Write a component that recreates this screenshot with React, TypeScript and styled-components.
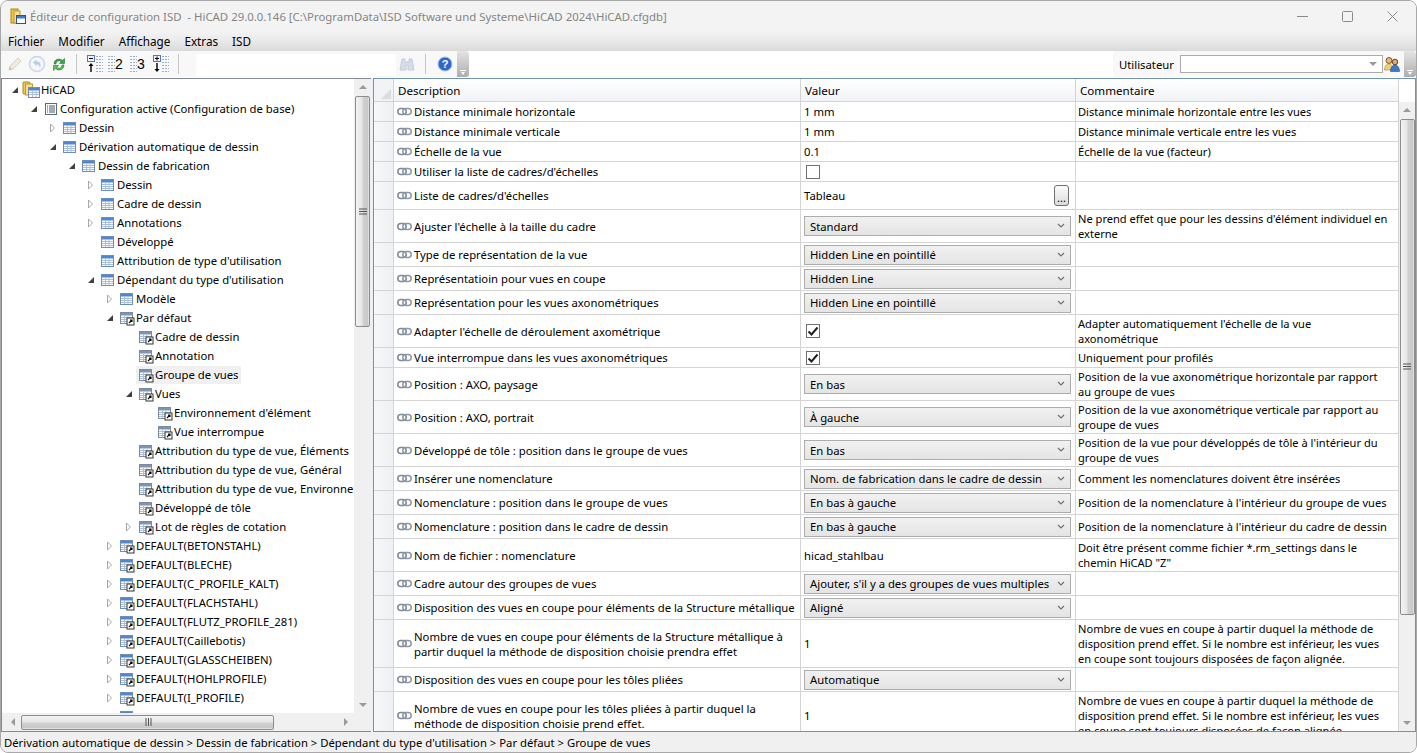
import React from "react";
import styled, { createGlobalStyle } from "styled-components";

const GlobalStyle = createGlobalStyle`
    html, body {
        margin: 0;
        padding: 0;
        background: #fff;
        overflow: hidden;
    }

    body {
        font-family: "Noto Sans", "Open Sans", sans-serif;
        font-size: 11.3px;
        color: #000;
    }
`;

const Window = styled.div`
    width: 1417px;
    height: 753px;
    box-sizing: border-box;
    border: 1px solid #a8a8a8;
    border-radius: 8px;
    background: #f0f0f0;
    display: flex;
    flex-direction: column;
    overflow: hidden;
`;

const TitleBar = styled.div`
    height: 30px;
    flex: none;
    display: flex;
    align-items: center;
    padding-left: 9px;
    padding-right: 1px;
    background: #f3f3f3;
    color: #858585;
`;

const TitleText = styled.span`
    margin-left: 3px;
    flex: 1;
    white-space: pre;
    font-size: 11.4px;
`;

const CaptionButton = styled.div`
    width: 45px;
    height: 30px;
    display: flex;
    align-items: center;
    justify-content: center;
`;

const MenuBar = styled.div`
    height: 20px;
    flex: none;
    display: flex;
    align-items: center;
    padding-left: 7px;
    gap: 14px;
    background: linear-gradient(#f4f4f4, #e9e9e9 50%, #dadada);
    font-size: 11.7px;
`;

const ToolRow = styled.div`
    height: 27px;
    flex: none;
    display: flex;
    background: #fff;
`;

const ToolStrip = styled.div`
    height: 26px;
    display: flex;
    align-items: center;
    background: #f8f8f8;
    border-radius: 3px 0 0 3px;
    padding-left: 6px;
`;

const ToolGap = styled.div`
    width: 200px;
    height: 22px;
    margin: 1px 3px 0 0;
    background: #fff;
`;

const ToolIcon = styled.div<{ $w: number; $mr?: number }>`
    width: ${(props): number => props.$w}px;
    height: 20px;
    margin-right: ${(props): number => props.$mr ?? 0}px;
    display: flex;
    align-items: center;
    justify-content: center;
    flex: none;
`;

const ToolSep = styled.div<{ $ml: number; $mr: number }>`
    width: 1px;
    height: 20px;
    background: #c6c6c6;
    margin: 0 ${(props): number => props.$mr}px 0 ${(props): number => props.$ml}px;
    flex: none;
`;

const Grip = styled.div`
    width: 12px;
    height: 26px;
    flex: none;
    position: relative;
    background: linear-gradient(#e4e4e4, #adadad);
    border-radius: 0 3px 3px 0;

    &::after {
        content: "";
        position: absolute;
        left: 3px;
        bottom: 6px;
        width: 6px;
        height: 1px;
        background: #fff;
    }

    &::before {
        content: "";
        position: absolute;
        left: 4px;
        bottom: 2px;
        border-style: solid;
        border-width: 3px 2.5px 0 2.5px;
        border-color: #fff transparent transparent transparent;
    }
`;

const ToolSpring = styled.div`
    flex: 1;
`;

const UserLabel = styled.span`
    width: 53px;
    flex: none;
    white-space: nowrap;
`;

const UserCombo = styled.div`
    width: 203px;
    height: 18px;
    box-sizing: border-box;
    border: 1px solid #ababab;
    margin-left: 8px;
    background: #fff;
    display: flex;
    align-items: center;
    justify-content: flex-end;
    padding-right: 5px;
    flex: none;
`;

const Panes = styled.div`
    flex: 1;
    min-height: 0;
    display: flex;
    gap: 1px;
`;

const TreePane = styled.div`
    width: 370px;
    flex: none;
    box-sizing: border-box;
    border: 1px solid #828790;
    border-right: none;
    background: #fff;
    display: flex;
    flex-direction: column;
    min-height: 0;
`;

const TreeBody = styled.div`
    flex: 1;
    min-height: 0;
    display: flex;
`;

const TreeList = styled.div`
    flex: 1;
    min-width: 0;
    overflow: hidden;
    padding-top: 1px;
`;

const TreeRow = styled.div<{ $level: number }>`
    height: 19px;
    display: flex;
    align-items: center;
    white-space: nowrap;
    padding-left: ${(props): number => 5 + props.$level * 19}px;
`;

const Expander = styled.div`
    width: 15px;
    height: 19px;
    flex: none;
    display: flex;
    align-items: center;
    justify-content: center;
`;

const TreeItem = styled.div<{ $selected?: boolean }>`
    height: 18px;
    display: flex;
    align-items: center;
    padding-right: 2px;
    background: ${(props): string => (props.$selected ? "#f0f0f0" : "transparent")};
`;

const TreeIcon = styled.div`
    width: 19px;
    height: 18px;
    flex: none;
    display: flex;
    align-items: center;
    justify-content: center;
`;

const VScroll = styled.div`
    width: 17px;
    flex: none;
    background: #f0f0f0;
    display: flex;
    flex-direction: column;
    align-items: center;
`;

const ArrowBox = styled.div<{ $grow?: boolean }>`
    height: 16px;
    flex: none;
    display: flex;
    align-items: center;
    justify-content: center;
    margin-top: ${(props): string => (props.$grow ? "auto" : "0")};
`;

const VThumb = styled.div<{ $top: number; $h: number }>`
    width: 15px;
    height: ${(props): number => props.$h}px;
    margin-top: ${(props): number => props.$top}px;
    box-sizing: border-box;
    border: 1px solid #8c8c8c;
    border-radius: 2px;
    background: linear-gradient(90deg, #f3f3f3, #e6e6e6 45%, #d0d0d0 55%, #c8c8c8 90%, #ececec);
    display: flex;
    align-items: center;
    justify-content: center;
    flex: none;
`;

const HScroll = styled.div`
    height: 18px;
    flex: none;
    background: #f0f0f0;
    display: flex;
    align-items: center;
    padding-left: 3px;
`;

const HArrow = styled.div`
    width: 16px;
    display: flex;
    justify-content: center;
    flex: none;
`;

const HThumb = styled.div`
    width: 253px;
    height: 15px;
    box-sizing: border-box;
    border: 1px solid #8c8c8c;
    border-radius: 2px;
    background: linear-gradient(#f3f3f3, #e6e6e6 45%, #d0d0d0 55%, #c8c8c8 90%, #ececec);
    display: flex;
    align-items: center;
    justify-content: center;
    flex: none;
    margin-right: 64px;
`;

const GridPane = styled.div`
    flex: 1;
    min-width: 0;
    margin-left: 1px;
    box-sizing: border-box;
    border: 1px solid #6f93b8;
    background: #fff;
    display: flex;
    overflow: hidden;
`;

const Table = styled.div`
    width: 1025px;
    flex: none;
    display: flex;
    flex-direction: column;
    overflow: hidden;
`;

const HeaderRow = styled.div`
    height: 23px;
    flex: none;
    display: grid;
    grid-template-columns: 20px 407px 275px 323px;
    box-sizing: border-box;
    border-bottom: 1px solid #d4d4d4;
    background: linear-gradient(#fff, #f1f3f6);
`;

const HeaderCorner = styled.div`
    position: relative;
    background: #f2f3f5;
    border-right: 1px solid #d4d4d4;

    &::after {
        content: "";
        position: absolute;
        right: 2px;
        bottom: 2px;
        border-style: solid;
        border-width: 0 0 10px 10px;
        border-color: transparent transparent #dcdcdc transparent;
    }
`;

const HeaderCell = styled.div`
    display: flex;
    align-items: center;
    padding: 0 0 0 4px;
    border-right: 1px solid #d4d4d4;
    box-sizing: border-box;
    font-size: 11.6px;
`;

const Row = styled.div<{ $h: number }>`
    height: ${(props): number => props.$h}px;
    flex: none;
    display: grid;
    grid-template-columns: 20px 407px 275px 323px;
    box-sizing: border-box;
    border-bottom: 1px solid #d4d4d4;
`;

const Selector = styled.div`
    background: linear-gradient(90deg, #f7f8f9, #eff0f3);
    border-right: 1px solid #d4d4d4;
`;

const Cell = styled.div`
    display: flex;
    align-items: center;
    box-sizing: border-box;
    border-right: 1px solid #d4d4d4;
    min-width: 0;
`;

const DescCell = styled(Cell)`
    padding: 0 0 0 3px;
    gap: 2px;
    line-height: 15px;
`;

const ChainSlot = styled.div`
    flex: none;
    display: flex;
    align-items: center;
`;

const ValueCell = styled(Cell)`
    padding-left: 3px;
    padding-right: 3px;
`;

const CommentCell = styled(Cell)`
    padding: 0 7px 0 2px;
    line-height: 15px;
    font-size: 11.1px;
`;

const Combo = styled.div`
    width: 267px;
    height: 20px;
    box-sizing: border-box;
    border: 1px solid #acacac;
    background: linear-gradient(#f1f1f1, #e4e4e4);
    display: flex;
    align-items: center;
    justify-content: space-between;
    padding: 0 5px;
    flex: none;
    white-space: nowrap;
`;

const Check = styled.div`
    width: 14px;
    height: 14px;
    margin-left: 2px;
    box-sizing: border-box;
    border: 1px solid #707070;
    background: #fff;
    display: flex;
    align-items: center;
    justify-content: center;
`;

const ValueText = styled.span`
    flex: 1;
`;

const EllipsisButton = styled.div`
    width: 15px;
    height: 21px;
    margin-right: 3px;
    box-sizing: border-box;
    border: 1px solid #707070;
    border-radius: 3px;
    background: linear-gradient(#fbfbfb, #dcdcdc);
    display: flex;
    align-items: flex-end;
    justify-content: center;
    line-height: 15px;
    font-size: 11px;
    flex: none;
`;

const ScrollColumn = styled.div`
    flex: 1;
    display: flex;
    flex-direction: column;
`;

const ScrollHead = styled.div`
    height: 23px;
    flex: none;
    background: #fff;
`;

const GridScroll = styled(VScroll)`
    flex: 1;
    width: auto;
`;

const StatusBar = styled.div`
    height: 20px;
    flex: none;
    display: flex;
    align-items: center;
    padding-left: 3px;
    background: #f0f0f0;
`;

const GripSvg = styled.svg<{ $horizontal?: boolean }>`
    transform: ${(props): string => (props.$horizontal ? "rotate(90deg)" : "none")};
`;

const GridIcon: React.FC<{ link?: boolean; grey?: boolean }> = ({ link, grey }) => (
    <svg width="16" height="16" viewBox="0 0 16 16">
        <rect x="1.5" y="2.5" width="12" height="11" fill="#fff" stroke={grey ? "#7d8a9a" : "#6f8db5"} />
        <rect x="2" y="3" width="11" height="2.5" fill={grey ? "#7d95b5" : "#4f86d0"} />
        <path d="M2 7.5h11M2 9.500h11M2 11.500h11M5.500 6v7M9 6v7" stroke="#a9bedb" strokeWidth="1" />
        {link && (
            <g>
                <rect x="8" y="8" width="7" height="7" fill="#fff" stroke="#333" />
                <path d="M10 13l3-3M11 10h2v2" stroke="#000" strokeWidth="1.1" fill="none" />
            </g>
        )}
    </svg>
);

const ListIcon: React.FC = () => (
    <svg width="14" height="14" viewBox="0 0 14 14">
        <rect x="1.5" y="1.5" width="11" height="11" fill="#fff" stroke="#5c6b80" />
        <path d="M3 4h1M5 4h6M3 6h1M5 6h6M3 8h1M5 8h6M3 10h1M5 10h6" stroke="#46536a" strokeWidth="1" />
    </svg>
);

const RootIcon: React.FC = () => (
    <svg width="19" height="18" viewBox="0 0 19 18">
        <rect x="1" y="1" width="7" height="12" rx="1" fill="#f5c94a" stroke="#a8862b" />
        <rect x="3.5" y="3" width="7" height="11" fill="#fbe08a" stroke="#b99a3a" />
        <rect x="6.5" y="6.5" width="11" height="10" fill="#fff" stroke="#6f8db5" />
        <rect x="7" y="7" width="10" height="2.5" fill="#4f86d0" />
        <path d="M7 11.500h10M7 13.500h10M10.500 10v6M14 10v6" stroke="#a9bedb" />
    </svg>
);

const TitleIcon: React.FC = () => (
    <svg width="17" height="17" viewBox="0 0 17 17">
        <rect x="1" y="1" width="7" height="14" fill="#f5c533" stroke="#a8862b" />
        <rect x="4" y="3" width="6" height="12" fill="#fbe08a" stroke="#b99a3a" />
        <rect x="6.5" y="7.5" width="9" height="8" fill="#fff" stroke="#35507a" />
        <rect x="7" y="8" width="8" height="2.5" fill="#3f7ad0" />
    </svg>
);

const OpenArrow: React.FC = () => (
    <svg width="8" height="8" viewBox="0 0 8 8">
        <path d="M7 1v6H1z" fill="#404040" />
    </svg>
);

const ClosedArrow: React.FC = () => (
    <svg width="7" height="10" viewBox="0 0 7 10">
        <path d="M1.500 1l4 4-4 4z" fill="#fff" stroke="#a6a6a6" />
    </svg>
);

const Chain: React.FC = () => (
    <svg width="15" height="9" viewBox="0 0 15 9">
        <rect x="0.8" y="1.500" width="8.400" height="6" rx="3" fill="none" stroke="#7f8997" strokeWidth="1.500" />
        <rect x="5.800" y="1.500" width="8.400" height="6" rx="3" fill="none" stroke="#8a97a9" strokeWidth="1.500" />
    </svg>
);

const Chevron: React.FC = () => (
    <svg width="8" height="6" viewBox="0 0 8 6">
        <path d="M1 1l3 3 3-3" fill="none" stroke="#707070" strokeWidth="1.2" />
    </svg>
);

const Tick: React.FC = () => (
    <svg width="12" height="12" viewBox="0 0 12 12">
        <path d="M1.500 6.500l3 3 6-7" fill="none" stroke="#222" strokeWidth="2" />
    </svg>
);

const ScrollGrip: React.FC<{ horizontal?: boolean }> = ({ horizontal }) => (
    <GripSvg width="8" height="8" viewBox="0 0 8 8" $horizontal={horizontal}>
        <path d="M0 1h8M0 3.500h8M0 6h8" stroke="#555" strokeWidth="1" />
    </GripSvg>
);

const ScrollArrow: React.FC<{ dir: "up" | "down" | "left" | "right" }> = ({ dir }) => {
    const shapes = { up: "M0 5l4-4 4 4z", down: "M0 1l4 4 4-4z", left: "M5 0L1 4l4 4z", right: "M1 0l4 4-4 4z" };
    const vertical = dir === "up" || dir === "down";
    return (
        <svg width={vertical ? 8 : 6} height={vertical ? 6 : 8} viewBox={vertical ? "0 0 8 6" : "0 0 6 8"}>
            <path d={shapes[dir]} fill="#9a9a9a" />
        </svg>
    );
};

const Pencil: React.FC = () => (
    <svg width="16" height="16" viewBox="0 0 16 16">
        <path d="M2 14l1-4 8-8 3 3-8 8z" fill="#f2ead8" stroke="#d8d2c4" />
        <path d="M2 14l1-3 2 2z" fill="#c8c0b0" />
    </svg>
);

const UndoIcon: React.FC = () => (
    <svg width="18" height="18" viewBox="0 0 18 18">
        <circle cx="9" cy="9" r="7.500" fill="#f4f7fb" stroke="#c9d6e6" strokeWidth="1.500" />
        <path d="M5 7.500L8.500 4.500v2c3.500 0 5 2.500 3.500 6-.6-2.200-1.800-3.200-3.500-3.200v2z" fill="#b9cde6" />
    </svg>
);

const RefreshIcon: React.FC = () => (
    <svg width="14" height="15" viewBox="0 0 14 15">
        <path d="M2 7a5 5 0 0 1 8.500-3.600L12.500 1.500v5h-5l1.700-1.700A3 3 0 0 0 4 7z" fill="#3fa34d" stroke="#1f7a2e" strokeWidth="0.6" />
        <path d="M12 8a5 5 0 0 1-8.500 3.600L1.500 13.500v-5h5l-1.700 1.700A3 3 0 0 0 10 8z" fill="#5cc05c" stroke="#1f7a2e" strokeWidth="0.6" />
    </svg>
);

const LevelIcon: React.FC<{ label?: string; mode?: "collapse" | "expand" }> = ({ label, mode }) => (
    <svg width="18" height="18" viewBox="0 0 18 18">
        {mode ? (
            <g>
                <rect x="1.500" y="0.500" width="7" height="6" fill="#eef3fa" stroke="#4f7bb0" />
                <path d="M3 3.500h4" stroke="#000" />
                {mode === "expand" && <path d="M5 1.500v4" stroke="#000" />}
                <path d={mode === "collapse" ? "M5 8l2.500 3H5.700v6H4.300v-6H2.500z" : "M4.300 8h1.400v6h1.800L5 17l-2.500-3h1.800z"} fill="#000" />
                <path d="M10 1.500h7M10 4.500h7M10 7.500h7M10 10.500h7M10 13.500h7M10 16.500h7" stroke="#9aaec6" strokeDasharray="2 1" />
            </g>
        ) : (
            <g>
                <path d="M0 1.500h7M0 4.500h7M0 7.500h7M0 10.500h7M0 13.500h7M0 16.500h7" stroke="#9aaec6" strokeDasharray="2 1" />
                <text x="7" y="14" fontSize="14" fontFamily="Liberation Sans, sans-serif" fill="#000">
                    {label}
                </text>
            </g>
        )}
    </svg>
);

const Binoculars: React.FC = () => (
    <svg width="16" height="15" viewBox="0 0 16 15">
        <path d="M3 2h3v3h4V2h3l2 11H9V8H7v5H1z" fill="#d5dde8" stroke="#c2cddc" />
    </svg>
);

const HelpIcon: React.FC = () => (
    <svg width="16" height="16" viewBox="0 0 16 16">
        <circle cx="8" cy="8" r="7" fill="#2f66c8" stroke="#a9c2e8" />
        <text x="8" y="12" fontSize="11" fontWeight="700" textAnchor="middle" fontFamily="Liberation Sans, sans-serif" fill="#fff">
            ?
        </text>
    </svg>
);

const UsersIcon: React.FC = () => (
    <svg width="16" height="16" viewBox="0 0 16 16">
        <circle cx="5" cy="4.500" r="3" fill="#e8b878" stroke="#5a3a1a" strokeWidth="0.8" />
        <path d="M0.500 14c0-4 2-6 4.500-6s4 2 4 6z" fill="#f0d070" stroke="#a8862b" strokeWidth="0.6" />
        <circle cx="11" cy="6" r="2.800" fill="#e0a868" stroke="#4a2a10" strokeWidth="0.8" />
        <path d="M6.500 15.500c0-4 2-6.500 4.500-6.500s4.500 2.500 4.500 6.500z" fill="#3a78c8" stroke="#25508c" strokeWidth="0.6" />
    </svg>
);

type TreeNode = {
    level: number;
    label: string;
    arrow?: "open" | "closed";
    icon: "root" | "list" | "grid" | "link" | "linkGrey";
    selected?: boolean;
};

const treeNodes: TreeNode[] = [
    { level: 0, label: "HiCAD", arrow: "open", icon: "root" },
    { level: 1, label: "Configuration active (Configuration de base)", arrow: "open", icon: "list" },
    { level: 2, label: "Dessin", arrow: "closed", icon: "grid" },
    { level: 2, label: "Dérivation automatique de dessin", arrow: "open", icon: "grid" },
    { level: 3, label: "Dessin de fabrication", arrow: "open", icon: "grid" },
    { level: 4, label: "Dessin", arrow: "closed", icon: "grid" },
    { level: 4, label: "Cadre de dessin", arrow: "closed", icon: "grid" },
    { level: 4, label: "Annotations", arrow: "closed", icon: "grid" },
    { level: 4, label: "Développé", icon: "grid" },
    { level: 4, label: "Attribution de type d'utilisation", icon: "grid" },
    { level: 4, label: "Dépendant du type d'utilisation", arrow: "open", icon: "grid" },
    { level: 5, label: "Modèle", arrow: "closed", icon: "grid" },
    { level: 5, label: "Par défaut", arrow: "open", icon: "linkGrey" },
    { level: 6, label: "Cadre de dessin", icon: "linkGrey" },
    { level: 6, label: "Annotation", icon: "linkGrey" },
    { level: 6, label: "Groupe de vues", icon: "linkGrey", selected: true },
    { level: 6, label: "Vues", arrow: "open", icon: "linkGrey" },
    { level: 7, label: "Environnement d'élément", icon: "linkGrey" },
    { level: 7, label: "Vue interrompue", icon: "linkGrey" },
    { level: 6, label: "Attribution du type de vue, Éléments", icon: "linkGrey" },
    { level: 6, label: "Attribution du type de vue, Général", icon: "linkGrey" },
    { level: 6, label: "Attribution du type de vue, Environnement", icon: "linkGrey" },
    { level: 6, label: "Développé de tôle", icon: "linkGrey" },
    { level: 6, label: "Lot de règles de cotation", arrow: "closed", icon: "linkGrey" },
    { level: 5, label: "DEFAULT(BETONSTAHL)", arrow: "closed", icon: "link" },
    { level: 5, label: "DEFAULT(BLECHE)", arrow: "closed", icon: "link" },
    { level: 5, label: "DEFAULT(C_PROFILE_KALT)", arrow: "closed", icon: "link" },
    { level: 5, label: "DEFAULT(FLACHSTAHL)", arrow: "closed", icon: "link" },
    { level: 5, label: "DEFAULT(FLUTZ_PROFILE_281)", arrow: "closed", icon: "link" },
    { level: 5, label: "DEFAULT(Caillebotis)", arrow: "closed", icon: "link" },
    { level: 5, label: "DEFAULT(GLASSCHEIBEN)", arrow: "closed", icon: "link" },
    { level: 5, label: "DEFAULT(HOHLPROFILE)", arrow: "closed", icon: "link" },
    { level: 5, label: "DEFAULT(I_PROFILE)", arrow: "closed", icon: "link" },
    { level: 5, label: "", arrow: "closed", icon: "link" }
];

type GridRow = {
    h: number;
    desc: React.ReactNode;
    kind: "text" | "combo" | "check" | "checked" | "table";
    value?: string;
    comment?: React.ReactNode;
};

const gridRows: GridRow[] = [
    { h: 20, desc: "Distance minimale horizontale", kind: "text", value: "1 mm", comment: "Distance minimale horizontale entre les vues" },
    { h: 20, desc: "Distance minimale verticale", kind: "text", value: "1 mm", comment: "Distance minimale verticale entre les vues" },
    { h: 20, desc: "Échelle de la vue", kind: "text", value: "0.1", comment: "Échelle de la vue (facteur)" },
    { h: 20, desc: "Utiliser la liste de cadres/d'échelles", kind: "check" },
    { h: 28, desc: "Liste de cadres/d'échelles", kind: "table", value: "Tableau" },
    { h: 33, desc: "Ajuster l'échelle à la taille du cadre", kind: "combo", value: "Standard", comment: "Ne prend effet que pour les dessins d'élément individuel en externe" },
    { h: 24, desc: "Type de représentation de la vue", kind: "combo", value: "Hidden Line en pointillé" },
    { h: 24, desc: "Représentatioin pour vues en coupe", kind: "combo", value: "Hidden Line" },
    { h: 24, desc: "Représentation pour les vues axonométriques", kind: "combo", value: "Hidden Line en pointillé" },
    { h: 33, desc: "Adapter l'échelle de déroulement axométrique", kind: "checked", comment: "Adapter automatiquement l'échelle de la vue axonométrique" },
    { h: 20, desc: "Vue interrompue dans les vues axonométriques", kind: "checked", comment: "Uniquement pour profilés" },
    { h: 33, desc: "Position : AXO, paysage", kind: "combo", value: "En bas", comment: "Position de la vue axonométrique horizontale par rapport au groupe de vues" },
    { h: 33, desc: "Position : AXO, portrait", kind: "combo", value: "À gauche", comment: "Position de la vue axonométrique verticale par rapport au groupe de vues" },
    { h: 33, desc: "Développé de tôle : position dans le groupe de vues", kind: "combo", value: "En bas", comment: "Position de la vue pour développés de tôle à l'intérieur du groupe de vues" },
    { h: 24, desc: "Insérer une nomenclature", kind: "combo", value: "Nom. de fabrication dans le cadre de dessin", comment: "Comment les nomenclatures doivent être insérées" },
    { h: 24, desc: "Nomenclature : position dans le groupe de vues", kind: "combo", value: "En bas à gauche", comment: "Position de la nomenclature à l'intérieur du groupe de vues" },
    { h: 24, desc: "Nomenclature : position dans le cadre de dessin", kind: "combo", value: "En bas à gauche", comment: "Position de la nomenclature à l'intérieur du cadre de dessin" },
    { h: 33, desc: "Nom de fichier : nomenclature", kind: "text", value: "hicad_stahlbau", comment: 'Doit être présent comme fichier *.rm_settings dans le chemin HiCAD "Z"' },
    { h: 24, desc: "Cadre autour des groupes de vues", kind: "combo", value: "Ajouter, s'il y a des groupes de vues multiples" },
    { h: 24, desc: "Disposition des vues en coupe pour éléments de la Structure métallique", kind: "combo", value: "Aligné" },
    { h: 48, desc: "Nombre de vues en coupe pour éléments de la Structure métallique à partir duquel la méthode de disposition choisie prendra effet", kind: "text", value: "1", comment: "Nombre de vues en coupe à partir duquel la méthode de disposition prend effet. Si le nombre est inférieur, les vues en coupe sont toujours disposées de façon alignée." },
    { h: 24, desc: "Disposition des vues en coupe pour les tôles pliées", kind: "combo", value: "Automatique" },
    { h: 48, desc: "Nombre de vues en coupe pour les tôles pliées à partir duquel la méthode de disposition choisie prend effet.", kind: "text", value: "1", comment: "Nombre de vues en coupe à partir duquel la méthode de disposition prend effet. Si le nombre est inférieur, les vues en coupe sont toujours disposées de façon alignée." }
];

const renderTreeIcon = (icon: TreeNode["icon"]): React.ReactElement => {
    if (icon === "root") return <RootIcon />;
    if (icon === "list") return <ListIcon />;
    if (icon === "link") return <GridIcon link />;
    if (icon === "linkGrey") return <GridIcon link grey />;
    return <GridIcon />;
};

const renderValue = (row: GridRow): React.ReactNode => {
    if (row.kind === "combo") {
        return (
            <Combo>
                <span>{row.value}</span>
                <Chevron />
            </Combo>
        );
    }
    if (row.kind === "check") return <Check />;
    if (row.kind === "checked") {
        return (
            <Check>
                <Tick />
            </Check>
        );
    }
    if (row.kind === "table") {
        return (
            <>
                <ValueText>{row.value}</ValueText>
                <EllipsisButton>...</EllipsisButton>
            </>
        );
    }
    return <ValueText>{row.value}</ValueText>;
};

const App: React.FC = () => (
    <Window>
        <GlobalStyle />
        <TitleBar>
            <TitleIcon />
            <TitleText>{"Éditeur de configuration ISD  - HiCAD 29.0.0.146 [C:\\ProgramData\\ISD Software und Systeme\\HiCAD 2024\\HiCAD.cfgdb]"}</TitleText>
            <CaptionButton>
                <svg width="11" height="11" viewBox="0 0 11 11">
                    <path d="M0 5.500h11" stroke="#8a8a8a" />
                </svg>
            </CaptionButton>
            <CaptionButton>
                <svg width="11" height="11" viewBox="0 0 11 11">
                    <rect x="0.500" y="0.500" width="10" height="10" rx="1" fill="none" stroke="#8a8a8a" />
                </svg>
            </CaptionButton>
            <CaptionButton>
                <svg width="11" height="11" viewBox="0 0 11 11">
                    <path d="M0.500 0.500l10 10M10.500 0.500l-10 10" stroke="#8a8a8a" />
                </svg>
            </CaptionButton>
        </TitleBar>
        <MenuBar>
            <span>Fichier</span>
            <span>Modifier</span>
            <span>Affichage</span>
            <span>Extras</span>
            <span>ISD</span>
        </MenuBar>
        <ToolRow>
            <ToolStrip>
                <ToolIcon $w={16} $mr={5}>
                    <Pencil />
                </ToolIcon>
                <ToolIcon $w={18} $mr={6}>
                    <UndoIcon />
                </ToolIcon>
                <ToolIcon $w={14}>
                    <RefreshIcon />
                </ToolIcon>
                <ToolSep $ml={10} $mr={9} />
                <ToolIcon $w={18} $mr={4}>
                    <LevelIcon mode="collapse" />
                </ToolIcon>
                <ToolIcon $w={18} $mr={4}>
                    <LevelIcon label="2" />
                </ToolIcon>
                <ToolIcon $w={18} $mr={4}>
                    <LevelIcon label="3" />
                </ToolIcon>
                <ToolIcon $w={18}>
                    <LevelIcon mode="expand" />
                </ToolIcon>
                <ToolSep $ml={8} $mr={17} />
                <ToolGap />
                <ToolIcon $w={16} $mr={10}>
                    <Binoculars />
                </ToolIcon>
                <ToolSep $ml={0} $mr={11} />
                <ToolIcon $w={16} $mr={4}>
                    <HelpIcon />
                </ToolIcon>
            </ToolStrip>
            <Grip />
            <ToolSpring />
            <ToolStrip>
                <UserLabel>Utilisateur</UserLabel>
                <UserCombo>
                    <ScrollArrow dir="down" />
                </UserCombo>
                <ToolIcon $w={18} $mr={3}>
                    <UsersIcon />
                </ToolIcon>
            </ToolStrip>
            <Grip />
        </ToolRow>
        <Panes>
            <TreePane>
                <TreeBody>
                    <TreeList>
                        {treeNodes.map((node, index) => (
                            <TreeRow key={index} $level={node.level}>
                                <Expander>
                                    {node.arrow === "open" && <OpenArrow />}
                                    {node.arrow === "closed" && <ClosedArrow />}
                                </Expander>
                                <TreeItem $selected={node.selected}>
                                    <TreeIcon>{renderTreeIcon(node.icon)}</TreeIcon>
                                    <span>{node.label}</span>
                                </TreeItem>
                            </TreeRow>
                        ))}
                    </TreeList>
                    <VScroll>
                        <ArrowBox>
                            <ScrollArrow dir="up" />
                        </ArrowBox>
                        <VThumb $top={1} $h={231}>
                            <ScrollGrip />
                        </VThumb>
                        <ArrowBox $grow>
                            <ScrollArrow dir="down" />
                        </ArrowBox>
                    </VScroll>
                </TreeBody>
                <HScroll>
                    <HArrow>
                        <ScrollArrow dir="left" />
                    </HArrow>
                    <HThumb>
                        <ScrollGrip horizontal />
                    </HThumb>
                    <HArrow>
                        <ScrollArrow dir="right" />
                    </HArrow>
                </HScroll>
            </TreePane>
            <GridPane>
                <Table>
                    <HeaderRow>
                        <HeaderCorner />
                        <HeaderCell>Description</HeaderCell>
                        <HeaderCell>Valeur</HeaderCell>
                        <HeaderCell>Commentaire</HeaderCell>
                    </HeaderRow>
                    {gridRows.map((row, index) => (
                        <Row key={index} $h={row.h}>
                            <Selector />
                            <DescCell>
                                <ChainSlot>
                                    <Chain />
                                </ChainSlot>
                                <span>{row.desc}</span>
                            </DescCell>
                            <ValueCell>{renderValue(row)}</ValueCell>
                            <CommentCell>{row.comment}</CommentCell>
                        </Row>
                    ))}
                </Table>
                <ScrollColumn>
                    <ScrollHead />
                    <GridScroll>
                        <ArrowBox>
                            <ScrollArrow dir="up" />
                        </ArrowBox>
                        <VThumb $top={1} $h={496}>
                            <ScrollGrip />
                        </VThumb>
                        <ArrowBox $grow>
                            <ScrollArrow dir="down" />
                        </ArrowBox>
                    </GridScroll>
                </ScrollColumn>
            </GridPane>
        </Panes>
        <StatusBar>{"Dérivation automatique de dessin > Dessin de fabrication > Dépendant du type d'utilisation > Par défaut > Groupe de vues"}</StatusBar>
    </Window>
);

export default App;
